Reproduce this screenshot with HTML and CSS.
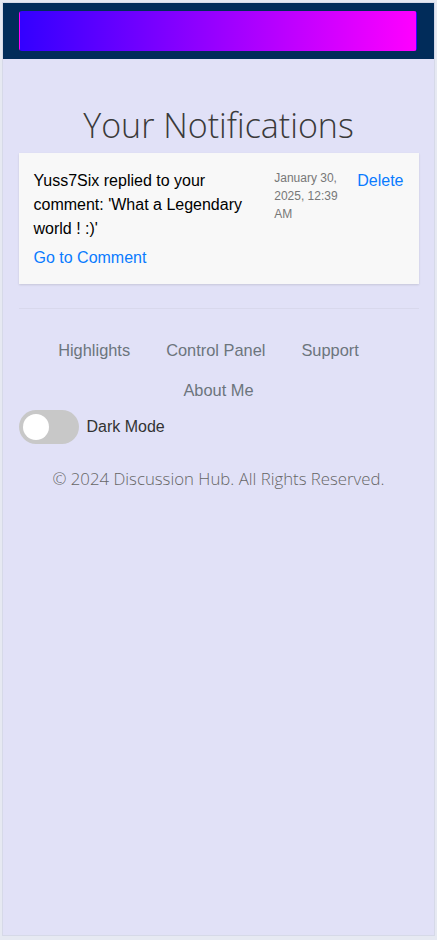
FILE: index.html
```html
<!DOCTYPE html>
<html lang="en">
<head>
<meta charset="utf-8">
<title>Notifications</title>
<link rel="stylesheet" href="styles.css">
</head>
<body>
<div class="page">
  <header class="topbar">
    <div class="gradient-bar"></div>
  </header>
  <main class="main">
    <h1 class="title">Your Notifications</h1>
    <div class="card">
      <div class="card-body">
        <p class="message">Yuss7Six replied to your comment: 'What a Legendary world ! :)'</p>
        <a class="link" href="#">Go to Comment</a>
      </div>
      <div class="date">January 30, 2025, 12:39 AM</div>
      <a class="delete" href="#">Delete</a>
    </div>
    <hr class="divider">
    <footer class="footer">
      <nav class="footer-links">
        <a href="#">Highlights</a>
        <a href="#">Control Panel</a>
        <a href="#" class="row-end">Support</a>
        <a href="#">About Me</a>
      </nav>
      <label class="toggle-row">
        <span class="switch"><span class="knob"></span></span>
        <span class="toggle-label">Dark Mode</span>
      </label>
      <p class="copyright">© 2024 Discussion Hub. All Rights Reserved.</p>
    </footer>
  </main>
</div>
</body>
</html>
```

FILE: styles.css
```css
html, body {
  margin: 0;
  padding: 0;
}
body {
  background: #e6e9f2;
  padding: 2px 2px 4px 2px;
  height: 940px;
  box-sizing: border-box;
}
.page {
  height: 934px;
  box-sizing: border-box;
  border: 1px solid #d6d9e8;
  background: #e1e1f7;
}
.topbar {
  background: #012c5a;
  padding: 8px 17px 8px 16px;
}
.gradient-bar {
  height: 38px;
  border: 1px solid transparent;
  border-radius: 3px;
  background: linear-gradient(to right, #3300ff, #ff00ff);
}
.main {
  padding: 0 15px;
}
.title {
  margin: 44px 0 6px;
  text-align: center;
  font-family: "Open Sans", sans-serif;
  font-weight: 300;
  font-size: 34px;
  line-height: 44px;
  color: #3a3a3a;
}
.card {
  max-width: 400px;
  margin: 0 auto;
  background: #f8f8f8;
  box-shadow: 0 1px 2px rgba(0,0,0,0.12);
  padding: 16px 15px 14px;
  box-sizing: border-box;
  display: flex;
  gap: 15px;
  font-family: "Liberation Sans", sans-serif;
}
.card-body {
  flex: 1;
}
.message {
  margin: 0 0 5px;
  font-size: 16px;
  line-height: 24px;
  color: #000;
}
.link, .delete {
  color: #0a7bff;
  text-decoration: none;
  font-size: 16px;
  line-height: 24px;
}
.date {
  width: 68px;
  font-size: 12px;
  line-height: 18px;
  color: #777;
}
.divider {
  max-width: 400px;
  margin: 24px auto 0;
  border: 0;
  border-top: 1px solid #d8d8ec;
}
.footer {
  max-width: 400px;
  margin: 0 auto;
  padding-top: 29px;
}
.footer-links {
  display: flex;
  flex-wrap: wrap;
  justify-content: center;
  column-gap: 36px;
  row-gap: 16px;
  font-family: "Liberation Sans", sans-serif;
  font-size: 16.4px;
  line-height: 24px;
}
.footer-links a {
  color: #6c757d;
  text-decoration: none;
}
.footer-links .row-end {
  margin-right: 20px;
}
.toggle-row {
  display: flex;
  align-items: center;
  gap: 8px;
  margin-top: 8px;
  font-family: "Liberation Sans", sans-serif;
  font-size: 16px;
  color: #333;
}
.switch {
  width: 60px;
  height: 34px;
  border-radius: 17px;
  background: #c8c8c8;
  display: flex;
  align-items: center;
  padding-left: 4px;
  box-sizing: border-box;
}
.knob {
  width: 26px;
  height: 26px;
  border-radius: 50%;
  background: #fff;
}
.copyright {
  margin: 23px 0 0;
  text-align: center;
  font-family: "Open Sans", sans-serif;
  font-weight: 300;
  font-size: 16.8px;
  line-height: 24px;
  color: #666;
}
```
